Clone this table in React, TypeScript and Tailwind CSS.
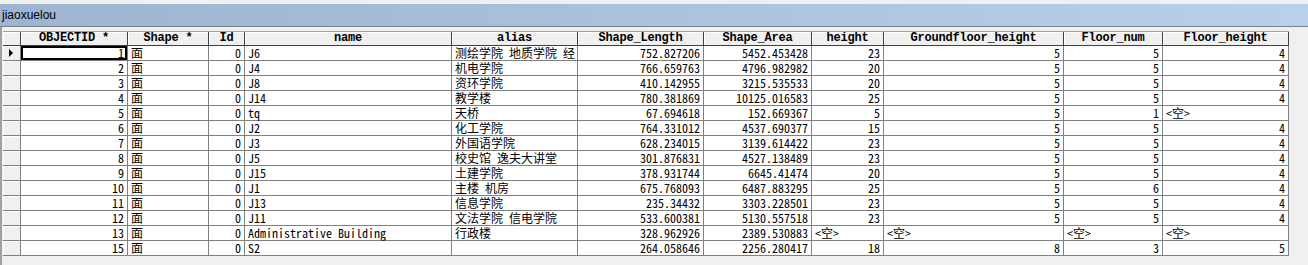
import React from "react";

type Col = { key: string; title: string; w: string; align: "left" | "right" };

const cols: Col[] = [
  { key: "oid", title: "OBJECTID *", w: "w-[107px]", align: "right" },
  { key: "shape", title: "Shape *", w: "w-[81px]", align: "left" },
  { key: "id", title: "Id", w: "w-[36px]", align: "right" },
  { key: "name", title: "name", w: "w-[207px]", align: "left" },
  { key: "alias", title: "alias", w: "w-[126px]", align: "left" },
  { key: "len", title: "Shape_Length", w: "w-[126px]", align: "right" },
  { key: "area", title: "Shape_Area", w: "w-[108px]", align: "right" },
  { key: "height", title: "height", w: "w-[72px]", align: "right" },
  { key: "gfh", title: "Groundfloor_height", w: "w-[180px]", align: "right" },
  { key: "fnum", title: "Floor_num", w: "w-[99px]", align: "right" },
  { key: "fh", title: "Floor_height", w: "w-[126px]", align: "right" },
];

const NULL = "<空>";

const rows: string[][] = [
  ["1", "面", "0", "J6", "测绘学院 地质学院 经", "752.827206", "5452.453428", "23", "5", "5", "4"],
  ["2", "面", "0", "J4", "机电学院", "766.659763", "4796.982982", "20", "5", "5", "4"],
  ["3", "面", "0", "J8", "资环学院", "410.142955", "3215.535533", "20", "5", "5", "4"],
  ["4", "面", "0", "J14", "教学楼", "780.381869", "10125.016583", "25", "5", "5", "4"],
  ["5", "面", "0", "tq", "天桥", "67.694618", "152.669367", "5", "5", "1", NULL],
  ["6", "面", "0", "J2", "化工学院", "764.331012", "4537.690377", "15", "5", "5", "4"],
  ["7", "面", "0", "J3", "外国语学院", "628.234015", "3139.614422", "23", "5", "5", "4"],
  ["8", "面", "0", "J5", "校史馆 逸夫大讲堂", "301.876831", "4527.138489", "23", "5", "5", "4"],
  ["9", "面", "0", "J15", "土建学院", "378.931744", "6645.41474", "20", "5", "5", "4"],
  ["10", "面", "0", "J1", "主楼 机房", "675.768093", "6487.883295", "25", "5", "6", "4"],
  ["11", "面", "0", "J13", "信息学院", "235.34432", "3303.228501", "23", "5", "5", "4"],
  ["12", "面", "0", "J11", "文法学院 信电学院", "533.600381", "5130.557518", "23", "5", "5", "4"],
  ["13", "面", "0", "Administrative Building", "行政楼", "328.962926", "2389.530883", NULL, NULL, NULL, NULL],
  ["15", "面", "0", "S2", "", "264.058646", "2256.280417", "18", "8", "3", "5"],
];

const cellFont =
  "font-['Noto_Sans_Mono_CJK_SC','SimSun','Liberation_Mono','Noto_Sans_CJK_SC',monospace] text-[12px] leading-[14px]";

export default function App() {
  return (
    <div className="w-[1308px] h-[265px] bg-[#f0f0f0] overflow-hidden text-black">
      {/* title strip */}
      <div className="h-[4px] bg-[#f0f0f0]" />
      <div className="h-[22px] flex items-center pl-[2px] bg-gradient-to-r from-[#9db4d2] to-[#b9d0ea] font-['Liberation_Sans',sans-serif] text-[12px]">
        jiaoxuelou
      </div>
      <div className="h-px bg-[#808080]" />

      <div className="border-l-2 border-[#a0a0a0] pl-px pt-[4px] h-[238px]">
        <div className="w-[1286px]">
          {/* header */}
          <div className="flex h-[15px] border-t border-[#a0a0a0] font-['Liberation_Mono',monospace] font-bold text-[12px] leading-[13px]">
            <div className="w-[18px] shrink-0 bg-[#f0f0f0] border-r border-b border-[#404040] shadow-[inset_1px_1px_0_#fff]" />
            {cols.map((c) => (
              <div
                key={c.key}
                className={`${c.w} shrink-0 bg-[#f0f0f0] border-r border-b border-[#404040] shadow-[inset_1px_1px_0_#fff] text-center whitespace-nowrap tracking-[-0.2px]`}
              >
                {c.title}
              </div>
            ))}
          </div>

          {/* rows */}
          {rows.map((r, ri) => (
            <div key={ri} className={`flex h-[15px] ${cellFont}`}>
              <div className="w-[18px] shrink-0 bg-[#f0f0f0] border-r border-b border-[#808080] shadow-[inset_1px_1px_0_#fff] flex items-center pl-[6px]">
                {ri === 0 && (
                  <svg width="5" height="8" viewBox="0 0 5 8">
                    <path d="M0 0 L4 4 L0 8 Z" fill="#000" />
                  </svg>
                )}
              </div>
              {cols.map((c, ci) => {
                const v = r[ci];
                const isNull = v === NULL;
                const alignCls = isNull || c.align === "left" ? "text-left pl-[3px]" : "text-right pr-[3px]";
                const focus = ri === 0 && ci === 0 ? "shadow-[inset_0_0_0_2px_#000]" : "";
                return (
                  <div
                    key={c.key}
                    className={`${c.w} shrink-0 bg-white border-r border-b border-[#808080] whitespace-nowrap ${alignCls} ${focus}`}
                  >
                    {v}
                  </div>
                );
              })}
            </div>
          ))}
        </div>
      </div>
    </div>
  );
}
